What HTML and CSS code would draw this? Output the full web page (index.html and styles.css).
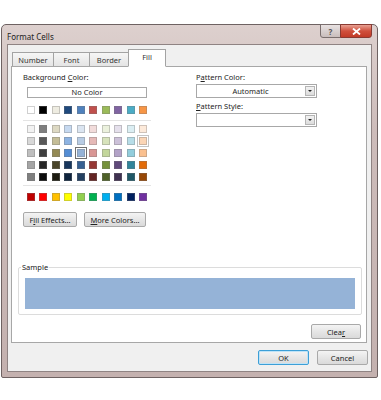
FILE: index.html
```html
<!DOCTYPE html>
<html>
<head>
<meta charset="utf-8">
<title>Format Cells</title>
<link rel="stylesheet" href="styles.css">
</head>
<body>

<div class="dialog">
  <div class="titlebar">
    <span class="title">Format Cells</span>
    <div class="caption-btns">
      <span class="cap-btn help">?</span>
      <span class="cap-btn close">
        <svg width="9" height="7" viewBox="0 0 9 7"><path d="M1 0.5 L8 6.5 M8 0.5 L1 6.5" stroke="#fff" stroke-width="1.8"/></svg>
      </span>
    </div>
  </div>

  <div class="client">
    <!-- Tabs -->
    <div class="tabs">
      <span class="tab tab-number">Number</span>
      <span class="tab tab-font">Font</span>
      <span class="tab tab-border">Border</span>
      <span class="tab tab-fill active">Fill</span>
    </div>

    <div class="panel">
      <div class="top">
        <div class="bg-col">
          <div class="label">Background <u>C</u>olor:</div>
          <div class="palette">
            <div class="nocolor">No Color</div>
            <div class="swatches row-main" id="row-main"></div>
            <div class="sep"></div>
            <div class="swatches row-theme" id="row-theme"></div>
            <div class="sep sep-std"></div>
            <div class="swatches" id="row-std"></div>
          </div>
          <div class="btn-row">
            <span class="btn btn-fill">F<u>i</u>ll Effects...</span>
            <span class="btn btn-more"><u>M</u>ore Colors...</span>
          </div>
        </div>

        <div class="pattern-col">
          <div class="label">P<u>a</u>ttern Color:</div>
          <div class="select">
            <span class="select-text">Automatic</span>
            <span class="select-arrow"></span>
          </div>
          <div class="label label-style"><u>P</u>attern Style:</div>
          <div class="select">
            <span class="select-text"></span>
            <span class="select-arrow"></span>
          </div>
        </div>
      </div>

      <fieldset class="sample">
        <legend>Sample</legend>
        <div class="sample-fill"></div>
      </fieldset>

      <div class="clear-row">
        <span class="btn btn-clear">Clea<u>r</u></span>
      </div>
    </div>

    <div class="footer">
      <span class="btn btn-ok">OK</span>
      <span class="btn btn-cancel">Cancel</span>
    </div>
  </div>
</div>

<script>
// Farger fra Office-temaet
const mainColors = ['#ffffff', '#000000', '#eeece1', '#1f497d', '#4f81bd', '#c0504d', '#9bbb59', '#8064a2', '#4bacc6', '#f79646'];
const themeColors = [
  '#f2f2f2', '#7f7f7f', '#ddd9c3', '#c6d9f0', '#dbe5f1', '#f2dcdb', '#ebf1dd', '#e5e0ec', '#dbeef3', '#fdeada',
  '#d8d8d8', '#595959', '#c4bd97', '#8db3e2', '#b8cce4', '#e5b9b7', '#d7e3bc', '#ccc1d9', '#b7dde8', '#fbd5b5',
  '#bfbfbf', '#3f3f3f', '#938953', '#548dd4', '#95b3d7', '#d99694', '#c3d69b', '#b2a2c7', '#92cddc', '#fac08f',
  '#a5a5a5', '#262626', '#494429', '#17365d', '#366092', '#953734', '#76923c', '#5f497a', '#31859b', '#e36c09',
  '#7f7f7f', '#0c0c0c', '#1d1b10', '#0f243e', '#244061', '#632423', '#4f6128', '#3f3151', '#205867', '#974806'
];
const stdColors = ['#c00000', '#ff0000', '#ffc000', '#ffff00', '#92d050', '#00b050', '#00b0f0', '#0070c0', '#002060', '#7030a0'];

function fillRow(id, colors, selected, hover) {
  const row = document.getElementById(id);
  colors.forEach((color, i) => {
    const s = document.createElement('span');
    s.className = 'swatch';
    if (i === selected) s.classList.add('selected');
    if (i === hover) s.classList.add('hover');
    s.style.background = color;
    row.appendChild(s);
  });
}

fillRow('row-main', mainColors);
fillRow('row-theme', themeColors, 24, 19);
fillRow('row-std', stdColors);
</script>

</body>
</html>
```

FILE: styles.css
```css
body {
  margin: 0;
  background: #ffffff;
  font-family: "Noto Sans", "Open Sans", sans-serif;
  font-size: 7.5px;
  color: #1e1e1e;
}

.dialog {
  margin: 24px 0 0 1px;
  width: 377px;
  height: 354px;
  box-sizing: border-box;
  border: 1px solid #6e6262;
  border-radius: 5px 5px 2px 2px;
  background: linear-gradient(#ddd0ce, #cdbcba 30%, #c4b1af);
  padding: 0 5px 5px;
  display: flex;
  flex-direction: column;
}

/* Tittellinje */
.titlebar {
  height: 19px;
  display: flex;
  justify-content: space-between;
  align-items: flex-start;
}
.title {
  margin-top: 6px;
  font-size: 8px;
  color: #222;
}
.caption-btns {
  display: flex;
  margin-top: -1px;
}
.cap-btn {
  height: 14px;
  box-sizing: border-box;
  border: 1px solid #7a6e6e;
  display: flex;
  align-items: center;
  justify-content: center;
}
.help {
  width: 21px;
  border-radius: 0 0 0 3px;
  background: linear-gradient(#e8e2e2, #c9bdbc);
  color: #555;
  font-size: 8px;
  font-weight: bold;
}
.close {
  width: 32px;
  margin-left: -1px;
  border-color: #8a3a32;
  border-radius: 0 0 3px 0;
  background: linear-gradient(#e8a193, #d0503d 50%, #c23b28);
}

/* Innhold */
.client {
  flex: 1;
  background: #f0f0f0;
  border: 1px solid #8f8383;
  display: flex;
  flex-direction: column;
}

.tabs {
  display: flex;
  align-items: flex-end;
  height: 22px;
  margin-left: 4px;
  margin-bottom: -1px;
}
.tab {
  height: 15px;
  box-sizing: border-box;
  border: 1px solid #a3a3a3;
  background: linear-gradient(#f6f6f6, #e4e4e4);
  margin-right: -1px;
  display: flex;
  align-items: center;
  justify-content: center;
  color: #333;
}
.tab-number { width: 42px; }
.tab-font { width: 37px; }
.tab-border { width: 40px; }
.tab-fill { width: 38px; }
.tab.active {
  height: 18px;
  background: #ffffff;
  border-bottom-color: #ffffff;
  position: relative;
  z-index: 1;
  padding-bottom: 2px;
}

.panel {
  flex: 1;
  margin: 0 4px 0 3px;
  background: #ffffff;
  border: 1px solid #a7a7a7;
  display: flex;
  flex-direction: column;
}

.top {
  display: flex;
  padding: 5px 0 0 11px;
}
.bg-col {
  width: 173px;
}
.label {
  height: 10px;
  line-height: 10px;
  color: #222;
}

.palette {
  margin-left: 4px;
  width: 124px;
}
.nocolor {
  margin-top: 5px;
  width: 120px;
  height: 11px;
  box-sizing: border-box;
  border: 1px solid #a8a8a8;
  text-align: center;
  line-height: 9px;
}

.swatches {
  width: 120px;
  display: grid;
  grid-template-columns: repeat(10, 8px);
  justify-content: space-between;
}
.row-main {
  margin-top: 8px;
}
.row-theme {
  row-gap: 4px;
}
.swatch {
  width: 8px;
  height: 8px;
  box-sizing: border-box;
  border: 1px solid rgba(120, 120, 120, 0.35);
}
.swatch.selected {
  outline: 1px solid #6f6f6f;
  outline-offset: 1px;
}
.swatch.hover {
  outline: 1px solid #c4c4c4;
  outline-offset: 1px;
}
.sep {
  height: 1px;
  width: 128px;
  margin: 6px 0 4px -4px;
  background: #e4e4e4;
}
.sep-std {
  margin: 4px 0 7px -4px;
}

.btn-row {
  display: flex;
  gap: 7px;
  margin-top: 11px;
}
.btn {
  height: 15px;
  box-sizing: border-box;
  border: 1px solid #a9a9a9;
  border-radius: 2px;
  background: linear-gradient(#f4f4f4, #e6e6e6 50%, #dadada);
  display: flex;
  align-items: center;
  justify-content: center;
  color: #222;
}
.btn-fill { width: 54px; }
.btn-more { width: 62px; }

.pattern-col {
  width: 121px;
}
.select {
  margin-top: 2px;
  height: 14px;
  box-sizing: border-box;
  border: 1px solid #a8a8a8;
  display: flex;
  align-items: stretch;
}
.select-text {
  flex: 1;
  text-align: center;
  line-height: 12px;
}
.select-arrow {
  width: 10px;
  margin: 1px;
  background: linear-gradient(#f2f2f2, #dcdcdc);
  border: 1px solid #b5b5b5;
  box-sizing: border-box;
  display: flex;
  align-items: center;
  justify-content: center;
}
.select-arrow::after {
  content: "";
  border-left: 2px solid transparent;
  border-right: 2px solid transparent;
  border-top: 2px solid #222;
}
.label-style {
  margin-top: 3px;
}

/* Eksempel */
.sample {
  margin: 35px 0 0 6px;
  width: 344px;
  box-sizing: border-box;
  padding: 6px 6px 5px;
  border: 1px solid #dcdcdc;
  border-radius: 2px;
}
.sample legend {
  padding: 0 1px;
  margin-left: -4px;
  line-height: 10px;
  color: #222;
}
.sample-fill {
  height: 31px;
  background: #95b3d7;
}

.clear-row {
  display: flex;
  justify-content: flex-end;
  margin: 9px 5px 0 0;
}
.btn-clear { width: 50px; }

.footer {
  display: flex;
  justify-content: flex-end;
  gap: 8px;
  padding: 7px 3px 0 0;
  height: 28px;
  box-sizing: border-box;
}
.btn-ok,
.btn-cancel {
  width: 51px;
}
.btn-ok {
  border-color: #3c9fd7;
  box-shadow: inset 0 0 0 1px #bfe3f7;
}
```
